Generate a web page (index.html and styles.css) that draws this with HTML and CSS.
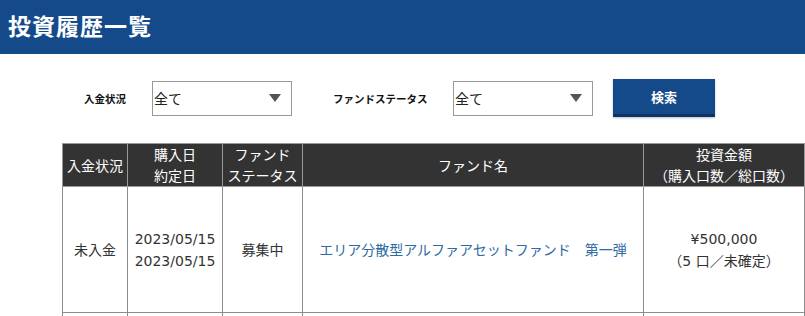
FILE: index.html
```html
<!DOCTYPE html>
<html lang="ja">
<head>
    <meta charset="UTF-8">
    <title>投資履歴一覧</title>
    <link rel="stylesheet" href="styles.css">
</head>
<body>
    <header class="page-header">
        <h1>投資履歴一覧</h1>
    </header>

    <!-- 検索条件 -->
    <div class="search-bar">
        <span class="search-label label-payment">入金状況</span>
        <div class="select-box">
            <span>全て</span>
            <span class="select-arrow"></span>
        </div>
        <span class="search-label label-status">ファンドステータス</span>
        <div class="select-box">
            <span>全て</span>
            <span class="select-arrow"></span>
        </div>
        <button class="search-btn">検索</button>
    </div>

    <!-- 履歴テーブル -->
    <table class="history-table">
        <thead>
            <tr>
                <th class="col-payment">入金状況</th>
                <th class="col-date">購入日<br>約定日</th>
                <th class="col-status">ファンド<br>ステータス</th>
                <th class="col-name">ファンド名</th>
                <th class="col-amount">投資金額<br>（購入口数／総口数）</th>
            </tr>
        </thead>
        <tbody>
            <tr>
                <td>未入金</td>
                <td>2023/05/15<br>2023/05/15</td>
                <td>募集中</td>
                <td><a class="fund-link" href="#">エリア分散型アルファアセットファンド　第一弾</a></td>
                <td>¥500,000<br>（5 口／未確定）</td>
            </tr>
            <tr>
                <td>&nbsp;</td>
                <td>&nbsp;</td>
                <td>&nbsp;</td>
                <td>&nbsp;</td>
                <td>&nbsp;</td>
            </tr>
        </tbody>
    </table>
</body>
</html>
```

FILE: styles.css
```css
:root {
    --navy: #154a8a;
    --dark: #333333;
    --line: #8c8c8c;
}

body {
    margin: 0;
    background: #fff;
    color: var(--dark);
    font-family: "Noto Sans CJK JP", "Noto Sans", sans-serif;
    overflow: hidden;
}

/* ヘッダー */
.page-header {
    background: var(--navy);
    height: 54px;
    display: flex;
    align-items: center;
    padding-left: 8px;
}

.page-header h1 {
    margin: 0;
    color: #fff;
    font-size: 23px;
    font-weight: bold;
    letter-spacing: 1px;
    line-height: 1;
    margin-top: -3px;
}

/* 検索条件 */
.search-bar {
    display: flex;
    align-items: center;
    margin-top: 26px;
    padding-left: 84px;
    height: 36px;
}

.search-label {
    font-size: 10.5px;
    font-weight: bold;
    color: #111;
}

.label-payment {
    width: 68px;
}

.label-status {
    width: 120px;
    margin-left: 41px;
}

.select-box {
    box-sizing: border-box;
    width: 140px;
    height: 35px;
    border: 1px solid #999;
    display: flex;
    align-items: center;
    justify-content: space-between;
    padding: 0 10px 0 1px;
    font-size: 14px;
    color: #222;
}

.select-arrow {
    width: 0;
    height: 0;
    border-left: 6px solid transparent;
    border-right: 6px solid transparent;
    border-top: 8px solid #555;
}

.search-btn {
    margin-left: 20px;
    width: 102px;
    height: 38px;
    background: var(--navy);
    border: none;
    border-bottom: 3px solid #0d3466;
    color: #fff;
    font-family: inherit;
    font-size: 13px;
    font-weight: bold;
    box-shadow: 0 1px 2px rgba(0, 0, 0, 0.25);
}

/* テーブル */
.history-table {
    margin: 27px 0 0 62px;
    border-collapse: collapse;
    width: 741px;
    table-layout: fixed;
    font-size: 14px;
    text-align: center;
}

.history-table th {
    background: var(--dark);
    color: #fff;
    font-weight: normal;
    line-height: 21px;
    height: 41px;
    padding: 0;
    border: 1px solid #999;
    white-space: nowrap;
}

.history-table td {
    border: 1px solid var(--line);
    height: 125px;
    line-height: 22px;
    padding: 0;
    vertical-align: middle;
    font-family: "DejaVu Sans", "Noto Sans CJK JP", sans-serif;
}

.col-payment { width: 64px; }
.col-date { width: 94px; }
.col-status { width: 79px; }
.col-name { width: 340px; }
.col-amount { width: 160px; }

.fund-link {
    color: #2f6aa3;
    text-decoration: none;
}
```
